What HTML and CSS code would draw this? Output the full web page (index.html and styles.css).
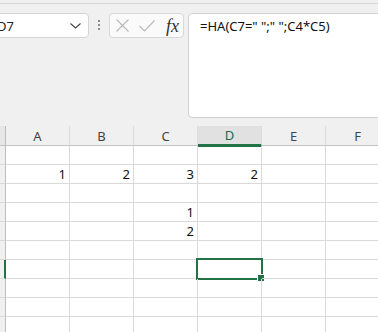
FILE: index.html
```html
<!DOCTYPE html>
<html>
<head>
    <link rel="stylesheet" href="styles.css">
</head>
<body>
    <div class="top-line"></div>

    <div class="formula-row">
        <div class="name-box">
            <span>D7</span>
            <svg class="chevron" width="11" height="6" viewBox="0 0 11 6"><polyline points="0.5,0.5 5.5,5 10.5,0.5" fill="none" stroke="#444" stroke-width="1.1"/></svg>
        </div>
        <div class="dots"><i></i><i></i><i></i></div>
        <div class="fx-buttons">
            <svg width="13" height="13" viewBox="0 0 13 13"><path d="M0.5 0.5 L12.5 12.5 M12.5 0.5 L0.5 12.5" stroke="#b9b9b9" stroke-width="1.1" fill="none"/></svg>
            <svg width="16" height="12" viewBox="0 0 16 12"><polyline points="0.5,6 5.5,11 15.5,0.5" fill="none" stroke="#b9b9b9" stroke-width="1.1"/></svg>
            <span class="fx">fx</span>
        </div>
        <div class="formula-bar">=HA(C7=" ";" ";C4*C5)</div>
    </div>

    <div class="sheet">
        <div class="corner"></div>
        <div class="col-head">A</div>
        <div class="col-head">B</div>
        <div class="col-head">C</div>
        <div class="col-head active">D</div>
        <div class="col-head">E</div>
        <div class="col-head">F</div>

        <div class="row-head"></div>
        <div class="cell"></div><div class="cell"></div><div class="cell"></div><div class="cell"></div><div class="cell"></div><div class="cell"></div>

        <div class="row-head"></div>
        <div class="cell">1</div><div class="cell">2</div><div class="cell">3</div><div class="cell">2</div><div class="cell"></div><div class="cell"></div>

        <div class="row-head"></div>
        <div class="cell"></div><div class="cell"></div><div class="cell"></div><div class="cell"></div><div class="cell"></div><div class="cell"></div>

        <div class="row-head"></div>
        <div class="cell"></div><div class="cell"></div><div class="cell">1</div><div class="cell"></div><div class="cell"></div><div class="cell"></div>

        <div class="row-head"></div>
        <div class="cell"></div><div class="cell"></div><div class="cell">2</div><div class="cell"></div><div class="cell"></div><div class="cell"></div>

        <div class="row-head"></div>
        <div class="cell"></div><div class="cell"></div><div class="cell"></div><div class="cell"></div><div class="cell"></div><div class="cell"></div>

        <div class="row-head active"></div>
        <div class="cell"></div><div class="cell"></div><div class="cell"></div><div class="cell selected"></div><div class="cell"></div><div class="cell"></div>

        <div class="row-head"></div>
        <div class="cell"></div><div class="cell"></div><div class="cell"></div><div class="cell"></div><div class="cell"></div><div class="cell"></div>

        <div class="row-head"></div>
        <div class="cell"></div><div class="cell"></div><div class="cell"></div><div class="cell"></div><div class="cell"></div><div class="cell"></div>

        <div class="row-head"></div>
        <div class="cell"></div><div class="cell"></div><div class="cell"></div><div class="cell"></div><div class="cell"></div><div class="cell"></div>
    </div>
</body>
</html>
```

FILE: styles.css
```css
body {
    margin: 0;
    width: 378px;
    height: 332px;
    overflow: hidden;
    background-color: #f0f0f0;
    font-family: "Noto Sans", sans-serif;
    color: #222;
}

.top-line {
    height: 3px;
    border-bottom: 1px solid #d6d6d6;
}

.formula-row {
    display: flex;
    align-items: flex-start;
    margin-top: 9px;
    height: 105px;
}

.formula-row > * {
    flex: none;
}

.name-box {
    box-sizing: border-box;
    display: flex;
    align-items: center;
    justify-content: space-between;
    width: 102px;
    height: 25px;
    margin-left: -13px;
    padding: 0 7px 0 9px;
    background-color: white;
    border: 1px solid #d4d4d4;
    border-radius: 4px;
    font-size: 13px;
    color: #222;
}

.chevron {
    margin-top: 1px;
}

.dots {
    display: flex;
    flex-direction: column;
    gap: 2px;
    width: 2px;
    margin: 7px 9px 0 9px;
}

.dots i {
    display: block;
    width: 2px;
    height: 2px;
    background-color: #8c8c8c;
}

.fx-buttons {
    box-sizing: border-box;
    display: flex;
    align-items: center;
    gap: 10px;
    width: 75px;
    height: 25px;
    padding-left: 6px;
    background-color: #fafafa;
    border: 1px solid #d8d8d8;
    border-radius: 4px;
}

.fx {
    margin-left: 1px;
    font-family: "Liberation Serif", serif;
    font-style: italic;
    font-size: 18px;
    color: #333;
    line-height: 18px;
}

.formula-bar {
    box-sizing: border-box;
    width: 200px;
    height: 105px;
    margin-left: 4px;
    padding: 3px 0 0 11px;
    background-color: white;
    border: 1px solid #d2d2d2;
    border-radius: 4px;
    font-size: 13px;
    color: #111;
}

.sheet {
    display: grid;
    grid-template-columns: 6px repeat(6, 64px);
    grid-template-rows: 20px;
    grid-auto-rows: 19px;
    margin-top: 8px;
    background-color: white;
}

.corner {
    background-color: #e6e6e6;
    border-right: 1px solid #bdbdbd;
    border-bottom: 1px solid #c4c4c4;
}

.col-head {
    display: flex;
    align-items: center;
    justify-content: center;
    background-color: #f0f0f0;
    border-right: 1px solid #dcdcdc;
    border-bottom: 1px solid #c4c4c4;
    font-size: 13px;
    color: #444;
}

.col-head.active {
    background-color: #e1e1e1;
    border-bottom: 3px solid #217346;
    color: #1d6b40;
    margin-bottom: -1px;
}

.row-head {
    box-sizing: border-box;
    background-color: #f0f0f0;
    border-right: 1px solid #bdbdbd;
    border-bottom: 1px solid #dadada;
}

.row-head.active {
    border-right: 2px solid #217346;
}

.cell {
    position: relative;
    padding-right: 3px;
    border-right: 1px solid #dadada;
    border-bottom: 1px solid #dadada;
    font-size: 13px;
    line-height: 18px;
    text-align: right;
    color: #111;
}

.selected::before {
    content: "";
    position: absolute;
    left: -2px;
    top: -2px;
    right: -2px;
    bottom: -2px;
    border: 2px solid #217346;
}

.selected::after {
    content: "";
    position: absolute;
    right: -4px;
    bottom: -4px;
    width: 6px;
    height: 6px;
    background-color: #217346;
    border: 1px solid white;
}
```
